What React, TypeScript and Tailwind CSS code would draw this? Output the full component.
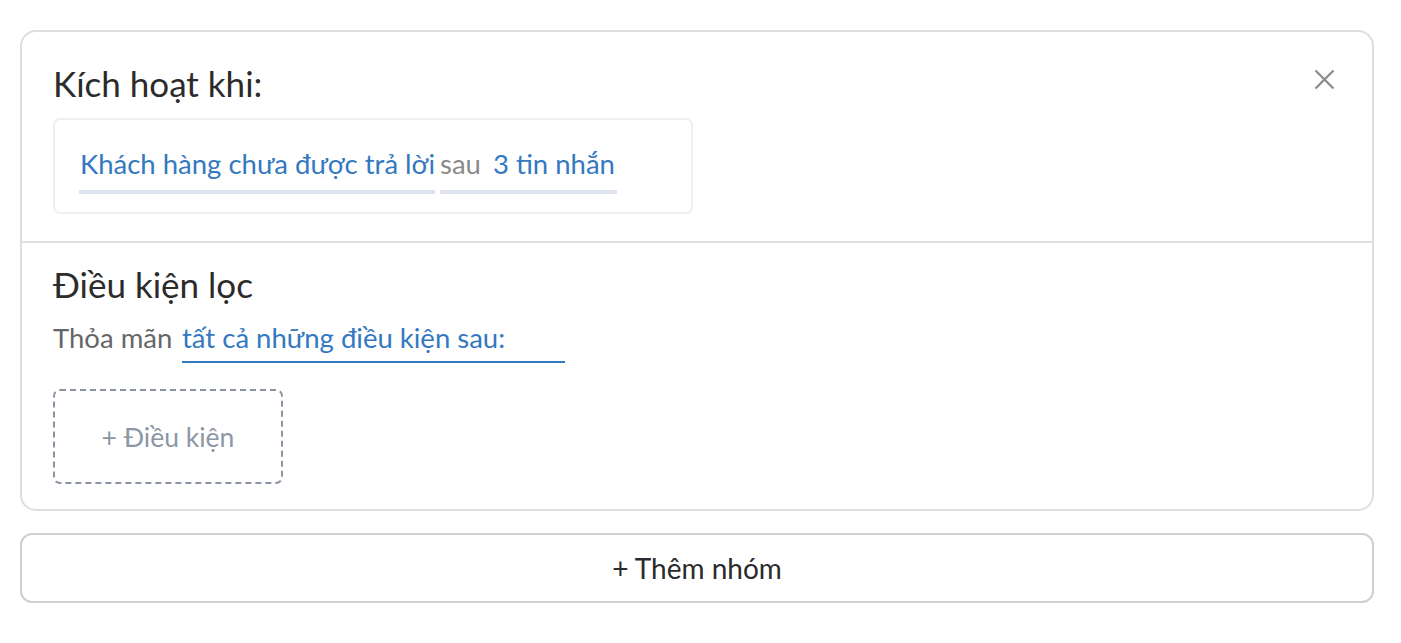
import React from 'react';

const font = { fontFamily: '"Source Sans Pro", Lato, "Noto Sans", sans-serif' };

export default function App() {
  return (
    <div className="min-h-screen bg-white pl-[20px] pt-[30px]" style={font}>
      <div className="w-[1354px] rounded-[16px] border-2 border-[#dedede] bg-white">
        <div className="relative px-[31px] pt-[31px] pb-[27px]">
          <h2 className="text-[35px] leading-[40px] text-[#2b2b2b]">Kích hoạt khi:</h2>
          <button className="absolute right-[37px] top-[37px] text-[#8a8a8a]" aria-label="close">
            <svg width="21" height="21" viewBox="0 0 21 21" fill="none" stroke="currentColor" strokeWidth="2.2">
              <path d="M1.5 1.5 L19.5 19.5 M19.5 1.5 L1.5 19.5" />
            </svg>
          </button>
          <div className="mt-[15px] h-[96px] w-[640px] rounded-[7px] border-2 border-[#efefef] px-[24px] pt-[28px]">
            <div className="flex items-start gap-[5px] whitespace-nowrap text-[27.5px] leading-[32px]">
              <span className="w-[356px] border-b-4 border-[#dde3ee] pb-[10px] pl-[1px] text-[#3479bf]">
                Khách hàng chưa được trả lời
              </span>
              <span className="w-[177px] border-b-4 border-[#dde3ee] pb-[10px]">
                <span className="text-[#8a8a8a]">sau</span>
                <span className="ml-[12px] text-[#3479bf]">3 tin nhắn</span>
              </span>
            </div>
          </div>
        </div>
        <div className="border-t-2 border-[#e0e0e0] px-[31px] pt-[21px] pb-[25px]">
          <h2 className="text-[35px] leading-[40px] text-[#2b2b2b]">Điều kiện lọc</h2>
          <div className="mt-[18px] flex items-start whitespace-nowrap text-[27.5px] leading-[32px]">
            <span className="w-[129px] text-[#666]">Thỏa mãn</span>
            <span className="w-[383px] border-b-2 border-[#3479bf] pb-[7px] text-[#3479bf]">
              tất cả những điều kiện sau:
            </span>
          </div>
          <button className="mt-[26px] flex h-[95px] w-[230px] items-center justify-center rounded-[7px] border-2 border-dashed border-[#8a93a4] text-[26.5px] leading-[32px] text-[#8d96a6]">
            + Điều kiện
          </button>
        </div>
      </div>
      <button className="mt-[22px] flex h-[70px] w-[1354px] items-center justify-center rounded-[12px] border-2 border-[#cfcfcf] bg-white text-[28px] leading-[32px] text-[#2b2b2b]">
        + Thêm nhóm
      </button>
    </div>
  );
}
